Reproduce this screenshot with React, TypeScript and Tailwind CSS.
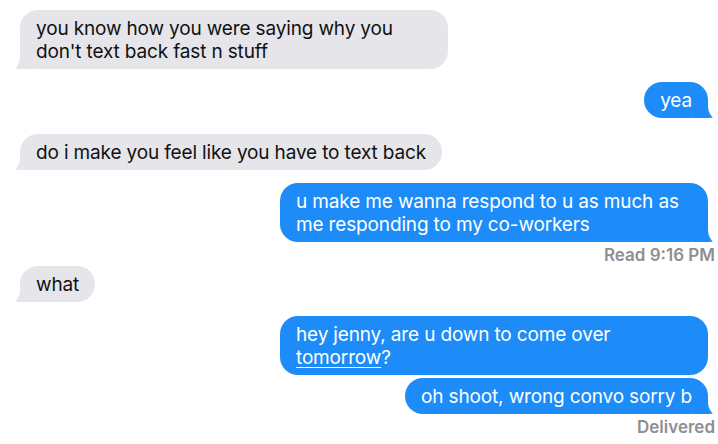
import React from 'react';

type Msg = {
  from: 'them' | 'me';
  text: React.ReactNode;
  tail?: boolean;
  mt: string;
  status?: string;
};

const messages: Msg[] = [
  { from: 'them', text: "you know how you were saying why you don't text back fast n stuff", tail: true, mt: 'mt-[10px]' },
  { from: 'me', text: 'yea', tail: true, mt: 'mt-[13px]' },
  { from: 'them', text: 'do i make you feel like you have to text back', tail: true, mt: 'mt-[16px]' },
  { from: 'me', text: 'u make me wanna respond to u as much as me responding to my co-workers', tail: true, mt: 'mt-[13px]', status: 'Read 9:16 PM' },
  { from: 'them', text: 'what', tail: true, mt: 'mt-[1px]' },
  {
    from: 'me',
    text: (
      <>
        hey jenny, are u down to come over <span className="underline decoration-1 underline-offset-[3px]">tomorrow</span>?
      </>
    ),
    mt: 'mt-[14px]',
  },
  { from: 'me', text: 'oh shoot, wrong convo sorry b', tail: true, mt: 'mt-[3px]', status: 'Delivered' },
];

const Tail: React.FC<{ side: 'left' | 'right'; color: string }> = ({ side, color }) => (
  <svg
    width="20"
    height="20"
    viewBox="0 0 20 20"
    className={`absolute bottom-0 ${side === 'left' ? '-left-[5px]' : '-right-[5px] -scale-x-100'}`}
  >
    <path d="M5 0 H20 V20 H9 C6 20 3 20 0 19.5 C3 17 5 13 5 7 Z" fill={color} />
  </svg>
);

const Bubble: React.FC<{ msg: Msg }> = ({ msg }) => {
  const mine = msg.from === 'me';
  return (
    <div className={`${msg.mt} flex flex-col ${mine ? 'items-end pr-[10px]' : 'items-start pl-[20px]'}`}>
      <div
        className={`relative max-w-[428px] rounded-[18px] px-[16px] py-[6.5px] text-[19px] leading-[23px] tracking-[-0.15px] ${
          mine ? 'bg-[#1d8cf8] text-white' : 'bg-[#e5e5ea] text-[#111]'
        }`}
      >
        {msg.tail && <Tail side={mine ? 'right' : 'left'} color={mine ? '#1d8cf8' : '#e5e5ea'} />}
        <span className="relative">{msg.text}</span>
      </div>
      {msg.status && (
        <div className="-mr-[7px] mt-[3px] text-[17px] font-semibold leading-[20px] text-[#8e8e93]">{msg.status}</div>
      )}
    </div>
  );
};

export default function App() {
  return (
    <div
      className="h-[444px] w-[718px] overflow-hidden bg-white"
      style={{ fontFamily: 'Inter, "Liberation Sans", Arial, sans-serif' }}
    >
      {messages.map((m, i) => (
        <Bubble key={i} msg={m} />
      ))}
    </div>
  );
}
